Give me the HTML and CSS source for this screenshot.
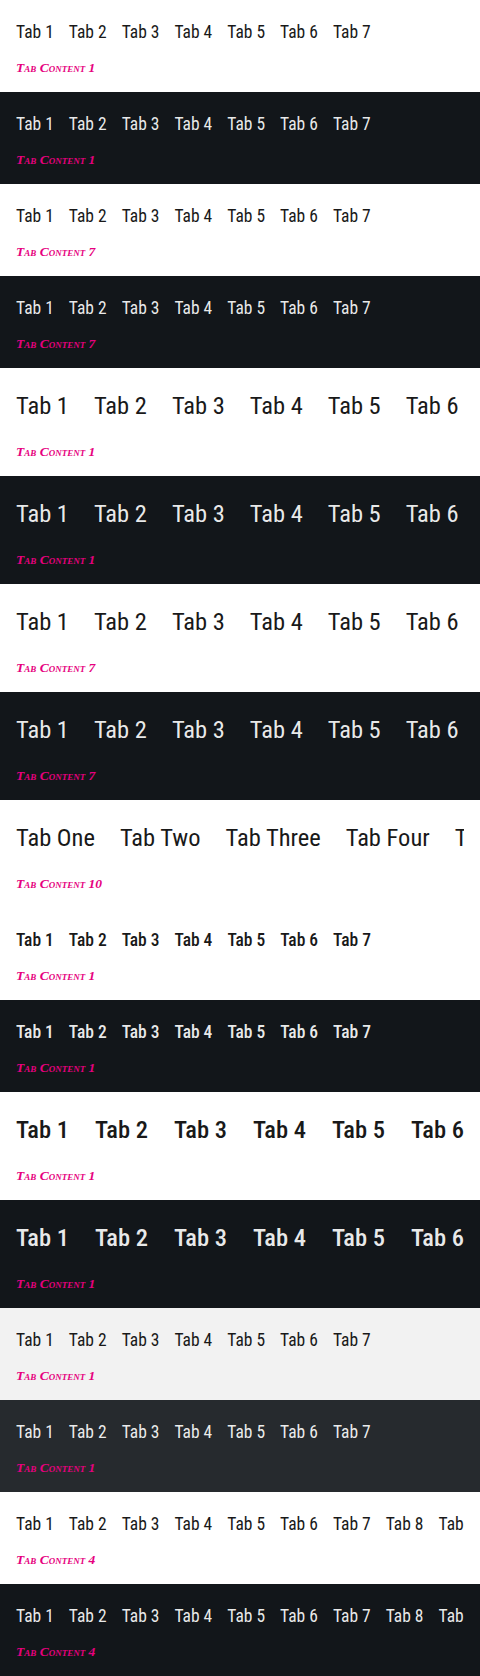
FILE: index.html
```html
<!DOCTYPE html>
<html lang="en">
<head>
<meta charset="utf-8">
<title>Tabs</title>
<link rel="stylesheet" href="styles.css">
</head>
<body>
<section class="demo light">
  <div class="tabs"><span class="tab">Tab 1</span><span class="tab">Tab 2</span><span class="tab">Tab 3</span><span class="tab">Tab 4</span><span class="tab">Tab 5</span><span class="tab">Tab 6</span><span class="tab">Tab 7</span></div>
  <div class="content">Tab Content 1</div>
</section>
<section class="demo dark">
  <div class="tabs"><span class="tab">Tab 1</span><span class="tab">Tab 2</span><span class="tab">Tab 3</span><span class="tab">Tab 4</span><span class="tab">Tab 5</span><span class="tab">Tab 6</span><span class="tab">Tab 7</span></div>
  <div class="content">Tab Content 1</div>
</section>
<section class="demo light">
  <div class="tabs"><span class="tab">Tab 1</span><span class="tab">Tab 2</span><span class="tab">Tab 3</span><span class="tab">Tab 4</span><span class="tab">Tab 5</span><span class="tab">Tab 6</span><span class="tab">Tab 7</span></div>
  <div class="content">Tab Content 7</div>
</section>
<section class="demo dark">
  <div class="tabs"><span class="tab">Tab 1</span><span class="tab">Tab 2</span><span class="tab">Tab 3</span><span class="tab">Tab 4</span><span class="tab">Tab 5</span><span class="tab">Tab 6</span><span class="tab">Tab 7</span></div>
  <div class="content">Tab Content 7</div>
</section>
<section class="demo light large">
  <div class="tabs"><span class="tab">Tab 1</span><span class="tab">Tab 2</span><span class="tab">Tab 3</span><span class="tab">Tab 4</span><span class="tab">Tab 5</span><span class="tab">Tab 6</span><span class="tab">Tab 7</span></div>
  <div class="content">Tab Content 1</div>
</section>
<section class="demo dark large">
  <div class="tabs"><span class="tab">Tab 1</span><span class="tab">Tab 2</span><span class="tab">Tab 3</span><span class="tab">Tab 4</span><span class="tab">Tab 5</span><span class="tab">Tab 6</span><span class="tab">Tab 7</span></div>
  <div class="content">Tab Content 1</div>
</section>
<section class="demo light large">
  <div class="tabs"><span class="tab">Tab 1</span><span class="tab">Tab 2</span><span class="tab">Tab 3</span><span class="tab">Tab 4</span><span class="tab">Tab 5</span><span class="tab">Tab 6</span><span class="tab">Tab 7</span></div>
  <div class="content">Tab Content 7</div>
</section>
<section class="demo dark large">
  <div class="tabs"><span class="tab">Tab 1</span><span class="tab">Tab 2</span><span class="tab">Tab 3</span><span class="tab">Tab 4</span><span class="tab">Tab 5</span><span class="tab">Tab 6</span><span class="tab">Tab 7</span></div>
  <div class="content">Tab Content 7</div>
</section>
<section class="demo light large">
  <div class="tabs"><span class="tab">Tab One</span><span class="tab">Tab Two</span><span class="tab">Tab Three</span><span class="tab">Tab Four</span><span class="tab">Tab Five</span><span class="tab">Tab Six</span><span class="tab">Tab Seven</span><span class="tab">Tab Eight</span><span class="tab">Tab Nine</span><span class="tab">Tab Ten</span></div>
  <div class="content">Tab Content 10</div>
</section>
<section class="demo light bold">
  <div class="tabs"><span class="tab">Tab 1</span><span class="tab">Tab 2</span><span class="tab">Tab 3</span><span class="tab">Tab 4</span><span class="tab">Tab 5</span><span class="tab">Tab 6</span><span class="tab">Tab 7</span></div>
  <div class="content">Tab Content 1</div>
</section>
<section class="demo dark bold">
  <div class="tabs"><span class="tab">Tab 1</span><span class="tab">Tab 2</span><span class="tab">Tab 3</span><span class="tab">Tab 4</span><span class="tab">Tab 5</span><span class="tab">Tab 6</span><span class="tab">Tab 7</span></div>
  <div class="content">Tab Content 1</div>
</section>
<section class="demo light large bold">
  <div class="tabs"><span class="tab">Tab 1</span><span class="tab">Tab 2</span><span class="tab">Tab 3</span><span class="tab">Tab 4</span><span class="tab">Tab 5</span><span class="tab">Tab 6</span><span class="tab">Tab 7</span></div>
  <div class="content">Tab Content 1</div>
</section>
<section class="demo dark large bold">
  <div class="tabs"><span class="tab">Tab 1</span><span class="tab">Tab 2</span><span class="tab">Tab 3</span><span class="tab">Tab 4</span><span class="tab">Tab 5</span><span class="tab">Tab 6</span><span class="tab">Tab 7</span></div>
  <div class="content">Tab Content 1</div>
</section>
<section class="demo grey">
  <div class="tabs"><span class="tab">Tab 1</span><span class="tab">Tab 2</span><span class="tab">Tab 3</span><span class="tab">Tab 4</span><span class="tab">Tab 5</span><span class="tab">Tab 6</span><span class="tab">Tab 7</span></div>
  <div class="content">Tab Content 1</div>
</section>
<section class="demo charcoal">
  <div class="tabs"><span class="tab">Tab 1</span><span class="tab">Tab 2</span><span class="tab">Tab 3</span><span class="tab">Tab 4</span><span class="tab">Tab 5</span><span class="tab">Tab 6</span><span class="tab">Tab 7</span></div>
  <div class="content">Tab Content 1</div>
</section>
<section class="demo light">
  <div class="tabs"><span class="tab">Tab 1</span><span class="tab">Tab 2</span><span class="tab">Tab 3</span><span class="tab">Tab 4</span><span class="tab">Tab 5</span><span class="tab">Tab 6</span><span class="tab">Tab 7</span><span class="tab">Tab 8</span><span class="tab">Tab 9</span><span class="tab">Tab 10</span></div>
  <div class="content">Tab Content 4</div>
</section>
<section class="demo dark">
  <div class="tabs"><span class="tab">Tab 1</span><span class="tab">Tab 2</span><span class="tab">Tab 3</span><span class="tab">Tab 4</span><span class="tab">Tab 5</span><span class="tab">Tab 6</span><span class="tab">Tab 7</span><span class="tab">Tab 8</span><span class="tab">Tab 9</span><span class="tab">Tab 10</span></div>
  <div class="content">Tab Content 4</div>
</section>
</body>
</html>
```

FILE: styles.css
```css
html, body {
  margin: 0;
  padding: 0;
  background: #ffffff;
}

body {
  font-family: Roboto, sans-serif;
}

.demo {
  padding: 16px;
  height: 92px;
  box-sizing: border-box;
}

.demo.large {
  height: 108px;
}

.light {
  background: #ffffff;
  color: #191919;
}

.grey {
  background: #f2f2f2;
  color: #191919;
}

.dark {
  background: #12161a;
  color: rgba(255, 255, 255, 0.92);
}

.charcoal {
  background: #262a2e;
  color: rgba(255, 255, 255, 0.92);
}

.tabs {
  display: flex;
  gap: 15px;
  overflow: hidden;
  white-space: nowrap;
}

.tab {
  flex: none;
  font-family: Roboto, sans-serif;
  font-stretch: 75%;
  font-weight: 400;
  font-size: 17.5px;
  line-height: 24px;
  padding: 4px 0;
}

.large .tabs {
  gap: 25px;
}

.large .tab {
  font-size: 24.5px;
  line-height: 36px;
}

.bold .tab {
  font-weight: 500;
}

.large.bold .tabs {
  gap: 26px;
}

.content {
  margin-top: 12px;
  font-family: "Liberation Serif", serif;
  font-size: 13.5px;
  line-height: 16px;
  font-weight: 700;
  font-style: italic;
  font-variant: small-caps;
  color: #e6007e;
}

.large .content {
  margin-top: 16px;
}
```
